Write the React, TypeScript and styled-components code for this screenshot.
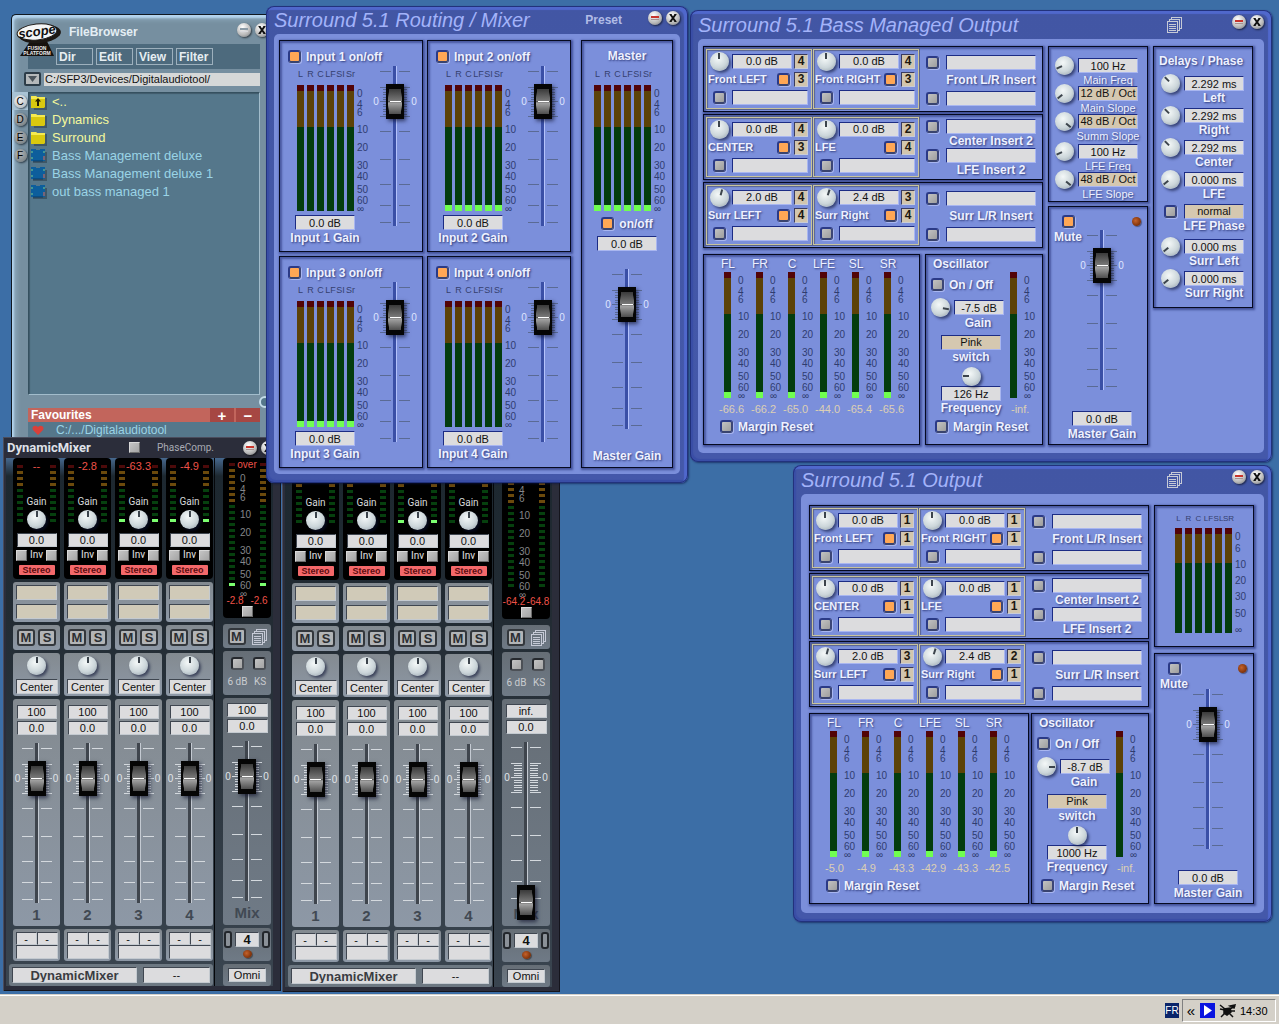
import React from "react";
import styled, { createGlobalStyle, css } from "styled-components";

const GlobalStyle = createGlobalStyle`
  *, *::before, *::after { box-sizing: border-box; }
  body { margin: 0; background: #3c6ea6; }
  body, button, input, select { font-family: "Liberation Sans", Arial, sans-serif; }
  button, input, select { margin: 0; padding: 0; border: 0; border-radius: 0; appearance: none; }
  ul { margin: 0; padding: 0; list-style: none; }
  h1, h2 { margin: 0; }
`;

/* ---------- desktop ---------- */

const Desktop = styled.div`
  display: grid;
  grid-template-rows: 1fr 30px;
  height: 100vh;
  overflow: hidden;
  background: #3c6ea6;
`;

const Canvas = styled.main`
  position: relative;
  overflow: hidden;
`;

const Placed = styled.div<{ $x: number; $y: number }>`
  position: absolute;
  left: ${(p) => p.$x}px;
  top: ${(p) => p.$y}px;
`;

/* ---------- shared controls ---------- */

const softShadow = "1px 1px 2px rgba(28, 38, 100, 0.8)";

const RoundButton = styled.button`
  display: grid;
  place-items: center;
  width: 14px;
  height: 14px;
  border-radius: 50%;
  background: radial-gradient(circle at 40% 30%, #ffffff, #b8b8b8 60%, #6c6c70);
  box-shadow: 1px 1px 2px rgba(0, 0, 0, 0.6);
`;

const WindowButtons = styled.div`
  display: flex;
  gap: 4px;
`;

function TitleButtons({ muted = false }: { muted?: boolean }) {
  return (
    <WindowButtons>
      <RoundButton aria-label="Minimize">
        <svg width="10" height="10" viewBox="0 0 10 10">
          <path d="M1 4h8" stroke={muted ? "#8a9aa6" : "#c8352c"} strokeWidth="2" />
          <path d="M1 6.5h8" stroke={muted ? "#d8d8dc" : "#a89090"} strokeWidth="1" />
        </svg>
      </RoundButton>
      <RoundButton aria-label="Close">
        <svg width="10" height="10" viewBox="0 0 10 10">
          <path d="M2.5 1.5l5 7M7.5 1.5l-5 7" stroke="#111" strokeWidth="2" />
          <path d="M1.5 1.5h2M6.5 1.5h2M1.5 8.5h2M6.5 8.5h2" stroke="#111" strokeWidth="1" />
        </svg>
      </RoundButton>
    </WindowButtons>
  );
}

const Check = styled.input.attrs({ type: "checkbox" })`
  flex: none;
  width: 13px;
  height: 13px;
  border: 2px solid;
  border-color: #2b3a86 #3c4676 #39436e #2b3a86;
  border-radius: 3px;
  background: linear-gradient(135deg, #c2c2c2, #9e9e9e);
  box-shadow: 1px 1px 0 #a8b6f0;
  &:checked {
    background: #ffa755;
  }
`;

const Pad = styled.input.attrs({ type: "checkbox" })<{ $framed?: boolean }>`
  flex: none;
  width: ${(p) => (p.$framed ? 13 : 11)}px;
  height: ${(p) => (p.$framed ? 13 : 11)}px;
  border: ${(p) => (p.$framed ? 2 : 1)}px solid;
  border-color: ${(p) => (p.$framed ? "#26292e #4c5056 #4c5056 #26292e" : "#d8d8d8 #6c6c6c #6c6c6c #d8d8d8")};
  border-radius: ${(p) => (p.$framed ? 3 : 0)}px;
  background: linear-gradient(135deg, #c4c4c4, #a4a4a4);
`;

const KnobFace = styled.span<{ $angle: number }>`
  position: relative;
  flex: none;
  display: block;
  width: 19px;
  height: 19px;
  border-radius: 50%;
  background: radial-gradient(circle at 42% 35%, #f4f8f8, #ccd6da 55%, #8e9aa6);
  box-shadow: 2px 2px 3px rgba(10, 16, 50, 0.6);
  &::before {
    content: "";
    position: absolute;
    inset: 0;
    background: linear-gradient(#3c444c, #3c444c) center 1px / 2px 6px no-repeat;
    transform: rotate(${(p) => p.$angle}deg);
  }
  input {
    position: absolute;
    inset: 0;
    width: 100%;
    height: 100%;
    opacity: 0;
  }
`;

function Knob({ angle = 0, label }: { angle?: number; label: string }) {
  return (
    <KnobFace $angle={angle}>
      <input type="range" min={-135} max={135} defaultValue={angle} aria-label={label} />
    </KnobFace>
  );
}

const fieldLook = css<{ $w?: number }>`
  flex: none;
  display: block;
  width: ${(p) => (p.$w ? p.$w + "px" : "100%")};
  height: 15px;
  min-width: 0;
  border: 1px solid;
  border-color: #1c2c84 #a9b6f0 #a9b6f0 #1c2c84;
  background: #dcdcde;
  color: #111;
  font-size: 11px;
  line-height: 13px;
  text-align: center;
`;

const Field = styled.input.attrs({ type: "text" })<{ $w?: number }>`
  ${fieldLook}
`;

const Choice = styled.select<{ $w?: number }>`
  ${fieldLook}
  background: #d5c8b0;
  text-align-last: center;
`;

const DigitButton = styled.button`
  flex: none;
  width: 14px;
  height: 15px;
  border: 1px solid;
  border-color: #3a3c60 #c8ccd8 #c8ccd8 #3a3c60;
  background: #d2c6ae;
  color: #1c1810;
  font-size: 12px;
  font-weight: bold;
  line-height: 13px;
`;

const Caption = styled.span<{ $small?: boolean; $plain?: boolean }>`
  color: #eef1ff;
  font-size: ${(p) => (p.$small ? 11 : 12)}px;
  font-weight: ${(p) => (p.$plain ? "normal" : "bold")};
  line-height: 14px;
  white-space: nowrap;
  text-shadow: ${softShadow};
`;

const CheckLabel = styled.label`
  display: flex;
  align-items: center;
  gap: 5px;
  height: 15px;
`;

const UnderCaption = styled.label<{ $w: number }>`
  display: flex;
  justify-content: center;
  width: ${(p) => p.$w}px;
  height: 14px;
`;

/* ---------- fader ---------- */

const FaderBox = styled.div<{ $ink: string }>`
  position: relative;
  flex: none;
  display: grid;
  grid-template-columns: 6px 32px 6px;
  width: 44px;
  height: 160px;
  color: ${(p) => p.$ink};
`;

const Zero = styled.span`
  padding-top: 30px;
  font-size: 10px;
  line-height: 11px;
  text-align: center;
`;

const FaderInput = styled.input.attrs({ type: "range" })`
  position: absolute;
  left: 13px;
  top: 0;
  width: 18px;
  height: 178px;
  background: transparent;
  writing-mode: vertical-lr;
  direction: rtl;
  &::-webkit-slider-runnable-track {
    background: transparent;
  }
  &::-webkit-slider-thumb {
    appearance: none;
    width: 18px;
    height: 35px;
    background:
      linear-gradient(#fff, #fff) center / 11px 1px no-repeat,
      radial-gradient(ellipse 7px 26px at center, transparent 94%, #050505) center / 14px 25px no-repeat,
      linear-gradient(#3a3a3a, #767676 46%, #4a4a4a 49%, #a2a2a2 56%, #4e4e4e) center / 14px 25px no-repeat,
      #050505;
    box-shadow: 2px 2px 4px rgba(10, 14, 40, 0.65);
  }
`;

const faderThemes = {
  blue: { tick: "#5a6a94", dark: "#3a4fa6", light: "#b4c2fb", zero: "#dfe5ff" },
  grey: { tick: "#d4d9de", dark: "#3f454d", light: "#c4cad2", zero: "#e0e4e8" },
};

function Fader({ label, theme = "blue", value = 125 }: { label: string; theme?: "blue" | "grey"; value?: number }) {
  const t = faderThemes[theme];
  const coarse = [5, 65, 93, 118, 139, 156];
  const fine = [23, 26, 28, 31, 33, 38, 40, 43, 45, 48];
  return (
    <FaderBox $ink={t.zero}>
      <Zero>0</Zero>
      <svg width="32" height="160" viewBox="0 0 32 160" shapeRendering="crispEdges">
        <path d={[...coarse, 21, 50].map((y) => `M1 ${y}.5h11M20 ${y}.5h11`).join("")} stroke={t.tick} />
        <path d={fine.map((y) => `M4 ${y}.5h8M20 ${y}.5h8`).join("")} stroke={t.tick} />
        <path d="M1 35.5h11M20 35.5h11" stroke={t.tick} />
        <rect x="14" y="0" width="3" height="160" fill={t.dark} />
        <rect x="17" y="0" width="1" height="160" fill={t.light} />
      </svg>
      <Zero>0</Zero>
      <FaderInput min={0} max={143} defaultValue={value} aria-label={label} />
    </FaderBox>
  );
}

/* ---------- meters ---------- */

const Bar = styled.span<{ $lit?: boolean; $short?: boolean }>`
  flex: none;
  width: 7px;
  height: ${(p) => (p.$short ? 105 : 126)}px;
  background:
    linear-gradient(#70ff50, #70ff50) bottom / 100% ${(p) => (p.$lit ? 6 : 0)}px no-repeat,
    linear-gradient(#520408 0 6px, #5c4208 6px ${(p) => (p.$short ? 35 : 42)}px, #043c0e ${(p) => (p.$short ? 35 : 42)}px);
`;

const ScaleBox = styled.span<{ $ink: string }>`
  display: flex;
  flex-direction: column;
  flex: none;
  width: 14px;
  padding-top: 4px;
  color: ${(p) => p.$ink};
  font-size: 10px;
  line-height: 10px;
`;

const ScaleMark = styled.span<{ $h: number }>`
  height: ${(p) => p.$h}px;
`;

const longScale: [string, number][] = [
  ["0", 11], ["4", 8], ["6", 17], ["10", 18], ["20", 18], ["30", 11], ["40", 13], ["50", 11], ["60", 8], ["∞", 6],
];
const shortScale: [string, number][] = [
  ["0", 12], ["6", 16], ["10", 16], ["20", 16], ["30", 17], ["50", 16], ["∞", 6],
];

function Scale({ ink = "#2f3c70", short = false }: { ink?: string; short?: boolean }) {
  return (
    <ScaleBox $ink={ink}>
      {(short ? shortScale : longScale).map(([text, h]) => (
        <ScaleMark key={text} $h={h}>{text}</ScaleMark>
      ))}
    </ScaleBox>
  );
}

const MeterWrap = styled.div`
  display: flex;
  flex-direction: column;
  gap: 5px;
`;

const MeterBars = styled.div`
  display: flex;
  gap: 3px;
`;

const MeterNames = styled.div<{ $short?: boolean }>`
  display: flex;
  gap: 3px;
  height: 14px;
  color: #35406e;
  font-size: ${(p) => (p.$short ? 8 : 9)}px;
  line-height: 16px;
  span {
    display: flex;
    justify-content: center;
    width: 7px;
  }
`;

function MeterBlock({ lit, short, names }: { lit?: boolean; short?: boolean; names: string[] }) {
  return (
    <MeterWrap>
      <MeterNames $short={short}>{names.map((n) => <span key={n}>{n}</span>)}</MeterNames>
      <MeterBars>
        {names.map((n) => <Bar key={n} $lit={lit} $short={short} />)}
        <Scale short={short} />
      </MeterBars>
    </MeterWrap>
  );
}

const mixNames = ["L", "R", "C", "LF", "SI", "Sr"];
const outNames = ["L", "R", "C", "LF", "SL", "SR"];

/* ---------- blue window ---------- */

const BlueFrame = styled.section<{ $w: number }>`
  width: ${(p) => p.$w}px;
  padding: 0 8px 9px;
  border-radius: 8px;
  background: linear-gradient(#4256a4, #4458aa);
  box-shadow: inset 0 0 0 1px #22327c, inset -3px 3px 1px 1px #5068cc, inset 2px -2px 1px 1px #3a4ea6, 1px 1px 2px rgba(10, 20, 70, 0.6);
`;

const BlueTitle = styled.header<{ $h: number }>`
  display: flex;
  align-items: center;
  height: ${(p) => p.$h}px;
  h1 {
    flex: 1;
    color: #a3b3fa;
    font-size: 20px;
    font-style: italic;
    font-weight: normal;
    line-height: 24px;
    white-space: nowrap;
  }
  > ${WindowButtons} {
    margin-bottom: 5px;
  }
`;

const PresetButton = styled.button`
  margin-right: 26px;
  background: none;
  color: #b1bce6;
  font-size: 12px;
  font-weight: bold;
`;

const IconButton = styled.button`
  display: flex;
  background: none;
`;

const DocsButton = styled(IconButton)`
  margin-right: 50px;
`;

function DocsIcon() {
  return (
    <svg width="15" height="16" viewBox="0 0 15 16" fill="none" stroke="#c6cad6" shapeRendering="crispEdges">
      <path d="M4.5 2.5v-2h10v11h-2M2.5 4.5v-2h10v11h-2" />
      <path d="M.5 4.5h10v11H.5zM2 7.5h7M2 9.5h7M2 11.5h7M2 13.5h7" />
    </svg>
  );
}

const BlueBody = styled.div<{ $pad: string }>`
  display: grid;
  gap: 4px;
  justify-content: start;
  padding: ${(p) => p.$pad};
  border-radius: 5px;
  background: #7b8fdb;
`;

const Panel = styled.section<{ $h?: number }>`
  display: flex;
  flex-direction: column;
  height: ${(p) => (p.$h ? p.$h + "px" : "auto")};
  border: 1px solid #060a20;
  background: #7b8fdb;
  box-shadow: 1px 1px 2px 1px rgba(36, 48, 116, 0.65), inset 2px 2px 2px rgba(48, 60, 130, 0.65);
`;

/* ---------- routing mixer ---------- */

const RoutingGrid = styled(BlueBody)`
  grid-template-columns: 144px 144px 92px;
  grid-template-rows: 212px 212px;
`;

const InputPanel = styled(Panel)`
  padding: 8px 0 0 8px;
`;

const InputBody = styled.div`
  display: flex;
  justify-content: space-between;
  padding: 2px 5px 0 7px;
`;

const GainColumn = styled.div`
  display: flex;
  flex-direction: column;
  gap: 4px;
  > ${MeterWrap} {
    padding-left: 2px;
  }
`;

const GainField = styled.div`
  display: flex;
  flex-direction: column;
  gap: 1px;
`;

const MasterPanel = styled(Panel)`
  grid-column: 3;
  grid-row: 1 / 3;
  align-items: center;
  margin-left: 6px;
  margin-right: -6px;
  padding-top: 8px;
  > ${MeterWrap} {
    align-self: flex-end;
    margin: 3px 4px 5px 0;
  }
  > ${Field} {
    margin: 5px 0 18px;
  }
  > ${Caption}:last-child {
    margin-top: 20px;
  }
`;

function RoutingInput({ n, lit }: { n: number; lit: boolean }) {
  return (
    <InputPanel>
      <CheckLabel>
        <Check defaultChecked />
        <Caption>{`Input ${n} on/off`}</Caption>
      </CheckLabel>
      <InputBody>
        <GainColumn>
          <MeterBlock names={mixNames} lit={lit} />
          <GainField>
            <Field $w={60} id={`gain${n}`} defaultValue="0.0 dB" />
            <UnderCaption $w={60} htmlFor={`gain${n}`}><Caption>{`Input ${n} Gain`}</Caption></UnderCaption>
          </GainField>
        </GainColumn>
        <Fader label={`Input ${n} level`} />
      </InputBody>
    </InputPanel>
  );
}

function RoutingMixer() {
  return (
    <BlueFrame $w={422}>
      <BlueTitle $h={28}>
        <h1>Surround 5.1 Routing / Mixer</h1>
        <PresetButton>Preset</PresetButton>
        <TitleButtons />
      </BlueTitle>
      <RoutingGrid $pad="6px 5px">
        <RoutingInput n={1} lit={false} />
        <RoutingInput n={2} lit />
        <RoutingInput n={3} lit />
        <RoutingInput n={4} lit={false} />
        <MasterPanel>
          <Caption>Master</Caption>
          <MeterBlock names={mixNames} lit />
          <CheckLabel>
            <Check defaultChecked />
            <Caption>on/off</Caption>
          </CheckLabel>
          <Field $w={60} defaultValue="0.0 dB" aria-label="Master level" />
          <Fader label="Master gain" />
          <Caption>Master Gain</Caption>
        </MasterPanel>
      </RoutingGrid>
    </BlueFrame>
  );
}

/* ---------- surround outputs ---------- */

const OutputBody = styled(BlueBody)`
  grid-template-columns: 340px 100px 100px;
  gap: 5px;
`;

const Column = styled.div<{ $gap: number }>`
  display: flex;
  flex-direction: column;
  gap: ${(p) => p.$gap}px;
`;

const RowPanel = styled(Panel)`
  flex-direction: row;
  gap: 1px;
  padding: 2px;
`;

const Channel = styled.div`
  width: 106px;
  height: 60px;
  padding: 2px 3px 2px 1px;
  border: 1px solid #c9c49c;
  box-shadow: inset 1px 1px 1px #5a6490, 0 0 0 1px #56618e;
`;

const ChannelLine = styled.div<{ $gap?: number }>`
  display: flex;
  align-items: center;
  gap: ${(p) => p.$gap ?? 2}px;
  height: 18px;
`;

const Slot = styled.span`
  display: flex;
  flex: none;
  justify-content: center;
  width: 22px;
`;

const Grow = styled.label`
  display: flex;
  flex: 1;
  min-width: 0;
`;

interface ChannelData { name: string; value: string; a: string; b: string; angle?: number }

function ChannelBox({ c }: { c: ChannelData }) {
  const id = React.useId();
  return (
    <Channel>
      <ChannelLine>
        <Slot><Knob angle={c.angle} label={`${c.name} gain`} /></Slot>
        <Field id={id} $w={60} defaultValue={c.value} />
        <DigitButton>{c.a}</DigitButton>
      </ChannelLine>
      <ChannelLine $gap={4}>
        <Grow htmlFor={id}><Caption $small>{c.name}</Caption></Grow>
        <Check defaultChecked aria-label={`${c.name} on`} />
        <DigitButton>{c.b}</DigitButton>
      </ChannelLine>
      <ChannelLine>
        <Slot><Check aria-label={`${c.name} insert on`} /></Slot>
        <Field $w={76} aria-label={`${c.name} insert`} />
      </ChannelLine>
    </Channel>
  );
}

const Inserts = styled.div<{ $line: number }>`
  display: flex;
  flex-direction: column;
  padding: ${(p) => (p.$line === 18 ? 4 : 2)}px 0 0 6px;
  > * {
    height: ${(p) => p.$line}px;
  }
`;

const InsertLine = styled.div`
  display: flex;
  align-items: center;
  gap: 7px;
`;

const InsertName = styled.label`
  display: flex;
  align-items: center;
  justify-content: center;
  width: 90px;
  margin-left: 20px;
`;

function InsertBlock({ names }: { names: string[] }) {
  const double = names.length === 2;
  const id = React.useId();
  return (
    <Inserts $line={double ? 15 : 18}>
      <InsertLine>
        <Check aria-label={`${names[0]} on`} />
        <Field id={id} $w={90} />
      </InsertLine>
      <InsertName htmlFor={id}><Caption>{names[0]}</Caption></InsertName>
      <InsertLine>
        <Check aria-label="Second insert on" />
        <Field id={id + "b"} $w={90} aria-label="Second insert" />
      </InsertLine>
      {double && <InsertName htmlFor={id + "b"}><Caption>{names[1]}</Caption></InsertName>}
    </Inserts>
  );
}

const Pair = styled.div<{ $gap: number }>`
  display: grid;
  grid-template-columns: 1fr 118px;
  gap: ${(p) => p.$gap}px;
  margin-top: 4px;
`;

const LevelsPanel = styled(Panel)`
  padding: 2px 0 0 12px;
`;

const LevelsRow = styled.div`
  display: grid;
  grid-template-columns: repeat(6, 32px);
`;

const LevelColumn = styled.div`
  display: flex;
  flex-direction: column;
  width: 32px;
`;

const LevelName = styled.span`
  display: flex;
  justify-content: center;
  width: 24px;
  height: 15px;
  color: #eef1ff;
  font-size: 12px;
  line-height: 15px;
  text-shadow: ${softShadow};
`;

const LevelBar = styled.div`
  display: flex;
  gap: 7px;
  padding-left: 8px;
`;

const LevelValue = styled.span`
  padding-left: 3px;
  color: #ddd0b4;
  font-size: 11px;
  line-height: 22px;
  white-space: nowrap;
`;

const InfValue = styled(LevelValue)`
  padding-left: 9px;
`;

const ResetLabel = styled(CheckLabel)`
  margin: -1px 0 0 4px;
`;

const OscPanel = styled(Panel)`
  padding: 2px 0 0 5px;
`;

const OscRow = styled.div`
  display: flex;
  height: 163px;
`;

const OscControls = styled.div`
  display: flex;
  flex-direction: column;
  width: 71px;
`;

const OscLine = styled.div`
  display: flex;
  align-items: center;
  gap: 4px;
  height: 19px;
  margin-top: 6px;
  margin-bottom: -1px;
`;

const OscGroup = styled.div<{ $top: number }>`
  display: flex;
  flex-direction: column;
  align-items: center;
  margin: ${(p) => p.$top}px 0 0 9px;
`;

const OscName = styled(UnderCaption)`
  margin-left: 17px;
`;

function Levels({ values }: { values: string[] }) {
  return (
    <LevelsPanel $h={191}>
      <LevelsRow>
        {["FL", "FR", "C", "LFE", "SL", "SR"].map((n, i) => (
          <LevelColumn key={n}>
            <LevelName>{n}</LevelName>
            <LevelBar><Bar $lit /><Scale /></LevelBar>
            <LevelValue>{values[i]}</LevelValue>
          </LevelColumn>
        ))}
      </LevelsRow>
      <ResetLabel><Check /><Caption>Margin Reset</Caption></ResetLabel>
    </LevelsPanel>
  );
}

const TopCaption = styled(Caption)`
  margin-left: 2px;
`;

const OnOff = styled(CheckLabel)`
  margin-top: 6px;
`;

function Oscillator({ gain, gainAngle, freq, freqAngle }: { gain: string; gainAngle: number; freq: string; freqAngle: number }) {
  const id = React.useId();
  return (
    <OscPanel $h={191}>
      <OscRow>
        <OscControls>
          <TopCaption>Oscillator</TopCaption>
          <OnOff><Check /><Caption>On / Off</Caption></OnOff>
          <OscLine>
            <Knob angle={gainAngle} label="Oscillator gain knob" />
            <Field id={id + "g"} $w={50} defaultValue={gain} />
          </OscLine>
          <OscName $w={60} htmlFor={id + "g"}><Caption>Gain</Caption></OscName>
          <OscGroup $top={5}>
            <Choice id={id + "s"} $w={60} defaultValue="Pink"><option>Pink</option><option>White</option></Choice>
            <UnderCaption $w={60} htmlFor={id + "s"}><Caption>switch</Caption></UnderCaption>
          </OscGroup>
          <OscGroup $top={3}>
            <Knob angle={freqAngle} label="Oscillator frequency knob" />
            <Field id={id + "f"} $w={60} defaultValue={freq} />
            <UnderCaption $w={60} htmlFor={id + "f"}><Caption>Frequency</Caption></UnderCaption>
          </OscGroup>
        </OscControls>
        <LevelColumn>
          <LevelName />
          <LevelBar><Bar /><Scale /></LevelBar>
          <InfValue>-inf.</InfValue>
        </LevelColumn>
      </OscRow>
      <ResetLabel><Check /><Caption>Margin Reset</Caption></ResetLabel>
    </OscPanel>
  );
}

const MasterStack = styled(Panel)`
  display: grid;
  flex: 1;
  grid-template-columns: 1fr;
  grid-template-rows: 1fr auto;
  justify-items: center;
  padding: 8px 5px 3px;
`;

const MuteRow = styled.div`
  display: flex;
  grid-area: 1 / 1;
  align-self: start;
  justify-content: space-between;
  width: 100%;
`;

const MuteLabel = styled.label`
  display: flex;
  flex-direction: column;
  align-items: center;
  gap: 2px;
`;

const Lamp = styled.span`
  display: block;
  width: 9px;
  height: 9px;
  border-radius: 50%;
  background: radial-gradient(circle at 40% 40%, #c4622c, #7c3008 70%);
  box-shadow: 1px 1px 1px rgba(0, 0, 0, 0.4);
`;

const LampSlot = styled.span`
  padding: 2px 1px 0 0;
`;

const FaderCell = styled.div`
  grid-area: 1 / 1;
  align-self: end;
  padding-left: 8px;
`;

const MasterFoot = styled.div`
  display: flex;
  flex-direction: column;
  align-items: center;
  grid-area: 2 / 1;
  gap: 1px;
  padding: 21px 0 0 8px;
`;

function MasterOut({ muted }: { muted: boolean }) {
  const id = React.useId();
  return (
    <MasterStack>
      <MuteRow>
        <MuteLabel><Check defaultChecked={muted} /><Caption>Mute</Caption></MuteLabel>
        <LampSlot><Lamp /></LampSlot>
      </MuteRow>
      <FaderCell><Fader label="Master output" /></FaderCell>
      <MasterFoot>
        <Field id={id} $w={60} defaultValue="0.0 dB" />
        <UnderCaption $w={60} htmlFor={id}><Caption>Master Gain</Caption></UnderCaption>
      </MasterFoot>
    </MasterStack>
  );
}

const SettingsPanel = styled(Panel)`
  gap: 2px;
  padding: 11px 0 0 6px;
`;

const SettingRow = styled.div<{ $h: number }>`
  display: grid;
  grid-template-columns: 19px 60px;
  grid-template-rows: 15px auto;
  column-gap: 4px;
  align-items: center;
  height: ${(p) => p.$h}px;
  align-content: start;
  justify-items: center;
  > ${UnderCaption} {
    grid-column: 2;
    height: 13px;
  }
`;

const DelayPanel = styled(Panel)`
  gap: 3px;
  padding: 7px 0 0 7px;
`;

const SettingGroup = styled.div`
  display: flex;
  flex-direction: column;
`;

const DelayTitle = styled(Caption)`
  margin: 0 0 8px -2px;
`;

interface Setting { name: string; value: string; angle: number; choice?: boolean; toggle?: boolean }

function SettingLine({ s, height, plain }: { s: Setting; height: number; plain?: boolean }) {
  const id = React.useId();
  return (
    <SettingRow $h={height}>
      {s.toggle ? <Check aria-label={`${s.name} on`} /> : <Knob angle={s.angle} label={`${s.name} knob`} />}
      {s.choice ? (
        <Choice id={id} $w={60} defaultValue={s.value}><option>{s.value}</option></Choice>
      ) : (
        <Field id={id} $w={60} defaultValue={s.value} />
      )}
      <UnderCaption $w={60} htmlFor={id}><Caption $plain={plain} $small={plain}>{s.name}</Caption></UnderCaption>
    </SettingRow>
  );
}

const filterGroups: Setting[][] = [
  [
    { name: "Main Freq", value: "100 Hz", angle: -115 },
    { name: "Main Slope", value: "12 dB / Oct", angle: -130, choice: true },
    { name: "Summ Slope", value: "48 dB / Oct", angle: 130, choice: true },
  ],
  [
    { name: "LFE Freq", value: "100 Hz", angle: -115 },
    { name: "LFE Slope", value: "48 dB / Oct", angle: 130, choice: true },
  ],
];

const delayGroups: Setting[][] = [
  [
    { name: "Left", value: "2.292 ms", angle: -45 },
    { name: "Right", value: "2.292 ms", angle: -45 },
    { name: "Center", value: "2.292 ms", angle: -45 },
    { name: "LFE", value: "0.000 ms", angle: -130 },
    { name: "LFE Phase", value: "normal", angle: 0, choice: true, toggle: true },
  ],
  [
    { name: "Surr Left", value: "0.000 ms", angle: -130 },
    { name: "Surr Right", value: "0.000 ms", angle: -130 },
  ],
];

interface OutputRow { left: ChannelData; right: ChannelData; inserts: string[] }

function makeRows(d: string[]): OutputRow[] {
  return [
    {
      left: { name: "Front LEFT", value: "0.0 dB", a: d[0], b: d[1] },
      right: { name: "Front RIGHT", value: "0.0 dB", a: d[2], b: d[3] },
      inserts: ["Front L/R Insert"],
    },
    {
      left: { name: "CENTER", value: "0.0 dB", a: d[4], b: d[5] },
      right: { name: "LFE", value: "0.0 dB", a: d[6], b: d[7] },
      inserts: ["Center Insert 2", "LFE Insert 2"],
    },
    {
      left: { name: "Surr LEFT", value: "2.0 dB", a: d[8], b: d[9], angle: 15 },
      right: { name: "Surr Right", value: "2.4 dB", a: d[10], b: d[11], angle: 18 },
      inserts: ["Surr L/R Insert"],
    },
  ];
}

function RoutingRows({ digits }: { digits: string }) {
  return (
    <>
      {makeRows(digits.split("")).map((r) => (
        <RowPanel key={r.left.name} $h={66}>
          <ChannelBox c={r.left} />
          <ChannelBox c={r.right} />
          <InsertBlock names={r.inserts} />
        </RowPanel>
      ))}
    </>
  );
}

function BassManagedOutput() {
  return (
    <BlueFrame $w={582}>
      <BlueTitle $h={29}>
        <h1>Surround 5.1 Bass Managed Output</h1>
        <DocsButton aria-label="Presets"><DocsIcon /></DocsButton>
        <TitleButtons />
      </BlueTitle>
      <OutputBody $pad="7px 5px 8px">
        <Column $gap={2}>
          <RoutingRows digits="434343244434" />
          <Pair $gap={5}>
            <Levels values={["-66.6", "-66.2", "-65.0", "-44.0", "-65.4", "-65.6"]} />
            <Oscillator gain="-7.5 dB" gainAngle={98} freq="126 Hz" freqAngle={-90} />
          </Pair>
        </Column>
        <Column $gap={4}>
          <SettingsPanel $h={156}>
            {filterGroups.map((g, i) => (
              <SettingGroup key={i}>
                {g.map((s) => <SettingLine key={s.name} s={s} height={28} plain />)}
              </SettingGroup>
            ))}
          </SettingsPanel>
          <MasterOut muted />
        </Column>
        <Column $gap={0}>
          <DelayPanel $h={262}>
            <SettingGroup>
              <DelayTitle>Delays / Phase</DelayTitle>
              {delayGroups[0].map((s) => <SettingLine key={s.name} s={s} height={32} />)}
            </SettingGroup>
            <SettingGroup>
              {delayGroups[1].map((s) => <SettingLine key={s.name} s={s} height={32} />)}
            </SettingGroup>
          </DelayPanel>
        </Column>
      </OutputBody>
    </BlueFrame>
  );
}

const OutMeterPanel = styled(Panel)`
  align-items: flex-end;
  padding: 5px 4px 0 0;
  > ${MeterWrap} {
    gap: 3px;
  }
`;

const WideOutputBody = styled(OutputBody)`
  grid-template-columns: 340px 100px;
`;

function SurroundOutput() {
  return (
    <BlueFrame $w={479}>
      <BlueTitle $h={29}>
        <h1>Surround 5.1 Output</h1>
        <DocsButton aria-label="Presets"><DocsIcon /></DocsButton>
        <TitleButtons />
      </BlueTitle>
      <WideOutputBody $pad="11px 8px 9px">
        <Column $gap={2}>
          <RoutingRows digits="111111113121" />
          <Pair $gap={2}>
            <Levels values={["-5.0", "-4.9", "-43.3", "-42.9", "-43.3", "-42.5"]} />
            <Oscillator gain="-8.7 dB" gainAngle={90} freq="1000 Hz" freqAngle={0} />
          </Pair>
        </Column>
        <Column $gap={6}>
          <OutMeterPanel $h={142}><MeterBlock names={outNames} short /></OutMeterPanel>
          <MasterOut muted={false} />
        </Column>
      </WideOutputBody>
    </BlueFrame>
  );
}

/* ---------- file browser ---------- */

const BrowserFrame = styled.section`
  position: relative;
  width: 275px;
  height: 430px;
  border-left: 1px solid #101820;
  border-top: 1px solid #101820;
  border-radius: 5px 0 0 0;
  background: #768fa0;
  box-shadow: inset 2px 3px 2px #b4d4ee, inset 5px 5px 4px #8ba6b8;
`;

const BrowserTitle = styled.header`
  display: flex;
  align-items: center;
  gap: 8px;
  height: 29px;
  padding: 4px 17px 0 4px;
  h2 {
    flex: 1;
    color: #e4eef4;
    font-size: 12px;
    line-height: 16px;
  }
  > ${WindowButtons} {
    margin-bottom: 4px;
  }
`;

const LogoSlot = styled.span`
  width: 45px;
  height: 18px;
  svg { display: block; overflow: visible; }
`;

function Logo() {
  return (
    <LogoSlot>
      <svg width="48" height="34" viewBox="0 0 48 34" role="img" aria-label="Scope Fusion Platform">
        <path d="M17 14L4 33h34L29 14z" fill="#16120e" />
        <ellipse cx="24" cy="11" rx="21" ry="9" transform="rotate(-6 24 11)" fill="#1c1814" />
        <ellipse cx="21" cy="9" rx="20" ry="8" transform="rotate(-6 21 9)" fill="#f4f6f6" stroke="#1c1814" strokeWidth="1" />
        <text x="21" y="13" fontSize="13" fontWeight="bold" fontStyle="italic" fill="#111" textAnchor="middle" transform="rotate(-8 21 9)" fontFamily="Liberation Sans">scope</text>
        <text x="21" y="27" fontSize="5" fontWeight="bold" fill="#eee" textAnchor="middle" fontFamily="Liberation Sans">FUSION</text>
        <text x="21" y="32" fontSize="5" fontWeight="bold" fill="#eee" textAnchor="middle" fontFamily="Liberation Sans">PLATFORM</text>
      </svg>
    </LogoSlot>
  );
}

const MenuBar = styled.nav`
  display: flex;
  align-items: center;
  gap: 3px;
  height: 25px;
  margin: 0 26px 0 16px;
  padding-left: 28px;
  background: #4d6a7d;
  button {
    width: 37px;
    height: 17px;
    padding-left: 2px;
    border: 1px solid #9db0bd;
    background: transparent;
    color: #e6eef2;
    font-size: 12px;
    font-weight: bold;
    line-height: 14px;
    text-align: left;
  }
`;

const PathRow = styled.div`
  display: flex;
  align-items: center;
  gap: 3px;
  height: 20px;
  padding: 0 26px 0 12px;
`;

const DropButton = styled.button`
  display: grid;
  place-items: center;
  width: 17px;
  height: 14px;
  border: 2px solid #2c3c48;
  border-radius: 2px;
  background: #b4b8ba;
`;

const PathField = styled.input`
  flex: 1;
  min-width: 0;
  height: 13px;
  padding-left: 1px;
  background: #d6d8d8;
  color: #111;
  font-size: 11px;
`;

const BrowserMain = styled.div`
  display: grid;
  grid-template-columns: 16px 1fr;
  margin: 3px 26px 0 0;
`;

const Drives = styled.div`
  display: flex;
  flex-direction: column;
`;

const DriveTab = styled.button<{ $on?: boolean }>`
  display: grid;
  place-items: center;
  height: 18px;
  background: ${(p) => (p.$on ? "#a9c3d4" : "transparent")};
  span {
    width: 13px;
    height: 13px;
    border-radius: 50%;
    background: radial-gradient(circle at 40% 35%, ${(p) => (p.$on ? "#f4f4f4, #a8b0b4" : "#b4b8ba, #6c7478")});
    box-shadow: 1px 1px 2px rgba(10, 20, 30, 0.7);
    color: #000;
    font-size: 10px;
    line-height: 13px;
  }
`;

const FileList = styled.ul`
  height: 303px;
  border-top: 1px solid #35505f;
  border-left: 1px solid #35505f;
  border-right: 1px solid #a2bccb;
  border-bottom: 1px solid #a2bccb;
  background: #55778b;
  box-shadow: inset 1px 1px 1px #40596a;
`;

const FileItem = styled.li<{ $folder: boolean }>`
  display: flex;
  align-items: center;
  gap: 5px;
  height: 18px;
  padding-left: 1px;
  color: ${(p) => (p.$folder ? "#f4f79c" : "#9ad4e6")};
  font-size: 13px;
  line-height: 16px;
  white-space: nowrap;
`;

function FolderIcon({ up }: { up?: boolean }) {
  return (
    <svg width="17" height="16" viewBox="0 0 17 16">
      <path d="M3 4h14v12H4z" fill="#2e4350" opacity=".6" />
      <path d="M1 2h5l1 1h8v10l-1 1H1z" fill="#d9c90f" />
      <path d="M1 2h5l1 1h8v2H1z" fill="#f5ea50" />
      {up && <path d="M8 4l3 3.5H9V12H7V7.5H5z" fill="#221c00" />}
    </svg>
  );
}

function DeviceIcon() {
  return (
    <svg width="17" height="16" viewBox="0 0 17 16">
      <path d="M3 4h14v11H3z" fill="#2e4350" opacity=".6" />
      <rect x="1" y="1" width="14" height="12" fill="#0d5e9c" />
      <path d="M6 1h4v1H6z" fill="#55778b" />
      <path d="M1 4h2M1 10h2M13 4h2" stroke="#7ad08c" />
      <path d="M13 9h2M13 11h2" stroke="#e06a58" />
      <path d="M3 13h10" stroke="#0a3c66" />
    </svg>
  );
}

const SplitHandle = styled.button`
  position: absolute;
  right: 15px;
  top: 381px;
  width: 12px;
  height: 12px;
  border: 2px solid #c4dcea;
  border-radius: 50%;
  background: #55778b;
`;

const FavBar = styled.div`
  display: flex;
  align-items: center;
  gap: 2px;
  height: 14px;
  margin: 13px 26px 0 16px;
  padding-left: 3px;
  background: #c2655c;
  color: #fff;
  h2 {
    flex: 1;
    font-size: 12px;
  }
  button {
    width: 24px;
    height: 14px;
    background: #a64743;
    color: #fff;
    font-size: 15px;
    font-weight: bold;
    line-height: 13px;
  }
`;

const FavItem = styled.div`
  display: flex;
  align-items: center;
  gap: 12px;
  height: 22px;
  margin: 0 26px 0 16px;
  padding: 0 0 6px 4px;
  background: #55778b;
  color: #9ad4e6;
  font-size: 12px;
`;

const files: [string, "up" | "folder" | "device"][] = [
  ["<..", "up"],
  ["Dynamics", "folder"],
  ["Surround", "folder"],
  ["Bass Management deluxe", "device"],
  ["Bass Management deluxe 1", "device"],
  ["out bass managed 1", "device"],
];

function FileBrowser() {
  return (
    <BrowserFrame>
      <BrowserTitle>
        <Logo />
        <h2>FileBrowser</h2>
        <TitleButtons muted />
      </BrowserTitle>
      <MenuBar>
        {["Dir", "Edit", "View", "Filter"].map((m) => <button key={m}>{m}</button>)}
      </MenuBar>
      <PathRow>
        <DropButton aria-label="Recent folders">
          <svg width="9" height="6" viewBox="0 0 9 6"><path d="M0 0h9L4.5 6z" fill="#4a545c" /></svg>
        </DropButton>
        <PathField defaultValue="C:/SFP3/Devices/Digitalaudiotool/" aria-label="Path" />
      </PathRow>
      <BrowserMain>
        <Drives>
          {["C", "D", "E", "F"].map((d) => <DriveTab key={d} $on={d === "C"}><span>{d}</span></DriveTab>)}
        </Drives>
        <FileList>
          {files.map(([name, kind]) => (
            <FileItem key={name} $folder={kind !== "device"}>
              {kind === "device" ? <DeviceIcon /> : <FolderIcon up={kind === "up"} />}
              {name}
            </FileItem>
          ))}
        </FileList>
      </BrowserMain>
      <FavBar>
        <h2>Favourites</h2>
        <button aria-label="Add favourite">+</button>
        <button aria-label="Remove favourite">−</button>
      </FavBar>
      <FavItem>
        <svg width="12" height="11" viewBox="0 0 12 11">
          <path d="M6 10L1 5C-1 2 3-1 6 2c3-3 7 0 5 3z" fill="#d8403a" />
        </svg>
        C:/.../Digitalaudiotool
      </FavItem>
      <SplitHandle aria-label="Resize favourites" />
    </BrowserFrame>
  );
}

/* ---------- dynamic mixer ---------- */

const MixerFrame = styled.section`
  width: 278px;
  padding: 0 8px 5px 3px;
  background: #2b2d3a;
  box-shadow: inset 1px 1px 0 #4a4c5c, inset -1px -1px 0 #14141c;
`;

const MixerTitle = styled.header`
  display: flex;
  align-items: center;
  height: 21px;
  margin-right: -2px;
  h2 {
    width: 123px;
    padding-left: 1px;
    color: #dfe1e8;
    font-family: Roboto, sans-serif;
    font-size: 13px;
    line-height: 18px;
  }
`;

const PhaseLabel = styled.label`
  display: flex;
  flex: 1;
  align-items: center;
  gap: 17px;
  color: #a9abb4;
  font-family: Roboto, sans-serif;
  font-size: 10px;
  white-space: nowrap;
`;

const MixerBody = styled.div`
  display: grid;
  grid-template-columns: 206px 48px;
  gap: 8px;
  padding-left: 3px;
  background: linear-gradient(#46688e, #1d2830 18px, #222b33 150px, #3a4550);
`;

const StripSide = styled.div`
  display: flex;
  flex-direction: column;
  gap: 3px;
  border-right: 1px solid #05070a;
  padding-right: 1px;
`;

const Strips = styled.div`
  display: grid;
  grid-template-columns: repeat(4, 47px);
  gap: 4px;
  margin-left: 4px;
  > div { min-width: 0; }
`;

const Strip = styled.div`
  display: flex;
  flex-direction: column;
  gap: 3px;
`;

const Block = styled.div<{ $h: number; $dark?: boolean; $pad?: string; $gap?: number }>`
  display: flex;
  flex-direction: column;
  align-items: center;
  gap: ${(p) => p.$gap ?? 0}px;
  height: ${(p) => p.$h}px;
  padding: ${(p) => p.$pad ?? "3px"};
  border-radius: 3px;
  background: ${(p) => (p.$dark ? "linear-gradient(#666e76, #6f7a86)" : "linear-gradient(#838a90, #8d98a6)")};
`;

const BlackBlock = styled.div<{ $h: number }>`
  display: flex;
  flex-direction: column;
  align-items: center;
  height: ${(p) => p.$h}px;
  border-radius: 4px;
  background: #000;
`;

const LedRow = styled.div`
  display: grid;
  grid-template-columns: 6px 27px 6px;
  width: 39px;
  padding-top: 7px;
`;

const LedColumn = styled.div`
  display: flex;
  flex-direction: column;
  gap: 3px;
`;

const Led = styled.span<{ $c: string }>`
  height: 3px;
  background: ${(p) => p.$c};
`;

function Leds({ amber, green, lit }: { amber: number; green: number; lit?: boolean }) {
  const colors = ["#4c0a0a", ...Array(amber).fill("#6c4a0c"), ...Array(green).fill("#06400e")];
  if (lit) colors[colors.length - 1] = "#7cff70";
  return <LedColumn>{colors.map((c, i) => <Led key={i} $c={c} />)}</LedColumn>;
}

const StripCenter = styled.div`
  display: flex;
  flex-direction: column;
  align-items: center;
  height: 68px;
`;

const Peak = styled.span`
  height: 11px;
  color: #ee5248;
  font-size: 11px;
  line-height: 3px;
  white-space: nowrap;
`;

const GainName = styled.span`
  margin: 19px 0 1px;
  color: #d6d8da;
  font-family: Roboto, sans-serif;
  font-size: 10px;
  line-height: 14px;
`;

const GreyField = styled.input.attrs({ type: "text" })<{ $w: number; $tan?: boolean; $h?: number }>`
  flex: none;
  width: ${(p) => p.$w}px;
  height: ${(p) => p.$h ?? 14}px;
  border: 1px solid;
  border-color: #3f4650 #c4cad0 #c4cad0 #3f4650;
  background: ${(p) => (p.$tan ? "#d0cab8" : "#dcdcde")};
  color: #111;
  font-size: 11px;
  text-align: center;
`;

const NameField = styled(GreyField)`
  color: #3a3c42;
  font-size: 13px;
  font-weight: bold;
`;

const InvRow = styled.div`
  display: flex;
  align-items: center;
  justify-content: space-between;
  width: 41px;
  margin: 2px 0 4px;
  color: #e2e2e2;
  font-family: Roboto, sans-serif;
  font-size: 10px;
  line-height: 12px;
`;

const StereoButton = styled.button`
  width: 36px;
  height: 10px;
  border-radius: 1px;
  background: #f4686a;
  color: #5c0c10;
  font-size: 9px;
  font-weight: bold;
  line-height: 9px;
`;

const ButtonPair = styled.div<{ $gap?: number }>`
  display: flex;
  align-items: center;
  gap: ${(p) => p.$gap ?? 3}px;
`;

const KeyButton = styled.button`
  width: 18px;
  height: 17px;
  border: 2px solid #33373c;
  border-radius: 3px;
  background: #b2b4b6;
  color: #2c2e32;
  font-size: 13px;
  font-weight: bold;
  line-height: 13px;
`;

const StripName = styled.span`
  color: #414953;
  font-size: 15px;
  font-weight: bold;
  line-height: 18px;
`;

const FaderSlot = styled.div`
  padding: 6px 0 1px;
`;

const HalfFields = styled.div`
  display: flex;
`;

const NameBar = styled.div`
  display: flex;
  gap: 6px;
  height: 22px;
  padding: 3px;
  border-radius: 3px;
  background: #6d7882;
`;

const MasterSide = styled.div`
  display: flex;
  flex-direction: column;
  gap: 3px;
`;

const MasterLeds = styled.div`
  display: grid;
  grid-template-columns: 6px 25px 6px;
  width: 37px;
  height: 132px;
  padding-top: 5px;
`;

const MasterScale = styled.div`
  display: flex;
  flex-direction: column;
  align-items: center;
`;

const OverMark = styled.span`
  height: 7px;
  color: #ee5248;
  font-size: 10px;
  line-height: 3px;
`;

const PeakPair = styled.div`
  display: grid;
  grid-template-columns: 24px 24px;
  justify-items: center;
  height: 16px;
  padding-top: 5px;
  color: #ee5248;
  font-size: 10px;
  white-space: nowrap;
`;

const BlackMaster = styled(BlackBlock)`
  margin-bottom: 3px;
`;

const MiniLabel = styled.label`
  display: flex;
  flex-direction: column;
  align-items: center;
  gap: 5px;
  color: #c9ccd0;
  font-family: Roboto, sans-serif;
  font-size: 10px;
  line-height: 14px;
  white-space: nowrap;
`;

const StepButton = styled.button`
  width: 8px;
  height: 17px;
  border: 2px solid #23272c;
  border-radius: 3px;
  background: #8b9198;
`;

const BoldField = styled(GreyField)`
  font-size: 13px;
  font-weight: bold;
`;

interface MixerProps {
  peaks: string[];
  lit: boolean[];
  out: [string, string];
  masterLit: boolean;
  level: string;
  masterValue: number;
}

function DynamicMixer({ peaks, lit, out, masterLit, level, masterValue }: MixerProps) {
  return (
    <MixerFrame>
      <MixerTitle>
        <h2>DynamicMixer</h2>
        <PhaseLabel><Pad />PhaseComp.</PhaseLabel>
        <TitleButtons />
      </MixerTitle>
      <MixerBody>
        <StripSide>
          <Strips>
            {peaks.map((peak, i) => (
              <Strip key={i}>
                <BlackBlock $h={121}>
                  <LedRow>
                    <Leds amber={3} green={6} lit={lit[i]} />
                    <StripCenter>
                      <Peak>{peak}</Peak>
                      <GainName>Gain</GainName>
                      <Knob label={`Channel ${i + 1} gain`} />
                    </StripCenter>
                    <Leds amber={3} green={6} lit={lit[i]} />
                  </LedRow>
                  <GreyField $w={40} defaultValue="0.0" aria-label={`Channel ${i + 1} gain value`} />
                  <InvRow>
                    <Pad aria-label="Invert left" />
                    <span>Inv</span>
                    <Pad aria-label="Invert right" />
                  </InvRow>
                  <StereoButton>Stereo</StereoButton>
                </BlackBlock>
                <Block $h={40} $gap={4}>
                  <GreyField $w={41} $h={15} $tan aria-label="Insert 1" />
                  <GreyField $w={41} $h={15} $tan aria-label="Insert 2" />
                </Block>
                <Block $h={25} $pad="4px 3px">
                  <ButtonPair><KeyButton>M</KeyButton><KeyButton>S</KeyButton></ButtonPair>
                </Block>
                <Block $h={43} $gap={4}>
                  <Knob label={`Channel ${i + 1} pan`} />
                  <GreyField $w={42} $h={15} defaultValue="Center" aria-label="Pan" />
                </Block>
                <Block $h={227} $pad="6px 0" $gap={2}>
                  <GreyField $w={40} defaultValue="100" aria-label="Width" />
                  <GreyField $w={40} defaultValue="0.0" aria-label="Level" />
                  <FaderSlot><Fader theme="grey" label={`Channel ${i + 1} fader`} /></FaderSlot>
                  <StripName>{i + 1}</StripName>
                </Block>
                <Block $h={32}>
                  <HalfFields>
                    <GreyField $w={21} $h={13} defaultValue="-" aria-label="Output left" />
                    <GreyField $w={21} $h={13} defaultValue="-" aria-label="Output right" />
                  </HalfFields>
                  <GreyField $w={42} aria-label="Channel note" />
                </Block>
              </Strip>
            ))}
          </Strips>
          <NameBar>
            <NameField $w={125} $h={16} defaultValue="DynamicMixer" aria-label="Mixer name" />
            <GreyField $w={67} $h={16} defaultValue="--" aria-label="Group" />
          </NameBar>
        </StripSide>
        <MasterSide>
          <BlackMaster $h={160}>
            <MasterLeds>
              <Leds amber={6} green={14} lit={masterLit} />
              <MasterScale>
                <OverMark>over</OverMark>
                <Scale ink="#84868a" />
              </MasterScale>
              <Leds amber={6} green={14} lit={masterLit} />
            </MasterLeds>
            <PeakPair><span>{out[0]}</span><span>{out[1]}</span></PeakPair>
            <Pad aria-label="Reset peaks" />
          </BlackMaster>
          <Block $dark $h={24} $pad="4px 3px">
            <ButtonPair $gap={6}>
              <KeyButton>M</KeyButton>
              <IconButton aria-label="Presets"><DocsIcon /></IconButton>
            </ButtonPair>
          </Block>
          <Block $dark $h={44} $pad="6px 0">
            <ButtonPair $gap={6}>
              <MiniLabel><Pad $framed />6 dB</MiniLabel>
              <MiniLabel><Pad $framed />KS</MiniLabel>
            </ButtonPair>
          </Block>
          <Block $dark $h={227} $pad="5px 0" $gap={2}>
            <GreyField $w={41} defaultValue={level} aria-label="Master width" />
            <GreyField $w={41} defaultValue="0.0" aria-label="Master level" />
            <FaderSlot><Fader theme="grey" label="Mix fader" value={masterValue} /></FaderSlot>
            <StripName>Mix</StripName>
          </Block>
          <Block $dark $h={33} $gap={2}>
            <ButtonPair>
              <StepButton aria-label="Previous output" />
              <BoldField $w={24} $h={15} defaultValue="4" aria-label="Output" />
              <StepButton aria-label="Next output" />
            </ButtonPair>
            <Lamp />
          </Block>
          <Block $dark $h={22} $pad="4px 0">
            <GreyField $w={38} defaultValue="Omni" aria-label="MIDI channel" />
          </Block>
        </MasterSide>
      </MixerBody>
    </MixerFrame>
  );
}

/* ---------- taskbar ---------- */

const Taskbar = styled.footer`
  display: flex;
  align-items: center;
  justify-content: flex-end;
  gap: 3px;
  padding: 2px 3px 0 0;
  border-top: 1px solid #d4d0c8;
  background: #d4d0c8;
  box-shadow: inset 0 1px 0 #fff;
  font-size: 11px;
`;

const Language = styled.button`
  width: 14px;
  height: 15px;
  background: #0a246a;
  color: #fff;
  font-size: 10px;
  line-height: 15px;
  text-align: center;
`;

const Tray = styled.div`
  display: flex;
  align-items: center;
  gap: 4px;
  width: 94px;
  height: 23px;
  padding-left: 3px;
  border: 1px solid;
  border-color: #808080 #fff #fff #808080;
`;

const Chevron = styled.button`
  width: 10px;
  background: none;
  font-size: 15px;
  line-height: 16px;
`;

function App() {
  return (
    <>
      <GlobalStyle />
      <Desktop>
        <Canvas>
          <Placed $x={11} $y={14}><FileBrowser /></Placed>
          <Placed $x={3} $y={437}>
            <DynamicMixer peaks={["--", "-2.8", "-63.3", "-4.9"]} lit={[false, false, true, true]} out={["-2.8", "-2.6"]} masterLit level="100" masterValue={125} />
          </Placed>
          <Placed $x={282} $y={438}>
            <DynamicMixer peaks={["--", "--", "--", "--"]} lit={[false, false, true, false]} out={["-64.2", "-64.8"]} masterLit={false} level="inf." masterValue={0} />
          </Placed>
          <Placed $x={690} $y={10}><BassManagedOutput /></Placed>
          <Placed $x={793} $y={465}><SurroundOutput /></Placed>
          <Placed $x={266} $y={6}><RoutingMixer /></Placed>
        </Canvas>
        <Taskbar>
          <Language>FR</Language>
          <Tray>
            <Chevron aria-label="Show hidden icons">«</Chevron>
            <svg width="15" height="15" viewBox="0 0 15 15">
              <rect width="15" height="15" fill="#0a14e0" />
              <path d="M4 2l8 5.500-8 5.500z" fill="#fff" />
            </svg>
            <svg width="17" height="14" viewBox="0 0 17 14" fill="none" stroke="#111" strokeWidth="1.500">
              <path d="M1 1l5 4M1 5l5 1M2 13l4-4M16 2l-5 3M16 7l-5 0M14 13l-4-4" />
              <path d="M5 5l6-1 1 4-4 3-3-2z" fill="#111" />
              <path d="M11 2l5-1-1 3z" fill="#111" />
            </svg>
            <time>14:30</time>
          </Tray>
        </Taskbar>
      </Desktop>
    </>
  );
}

export default App;
